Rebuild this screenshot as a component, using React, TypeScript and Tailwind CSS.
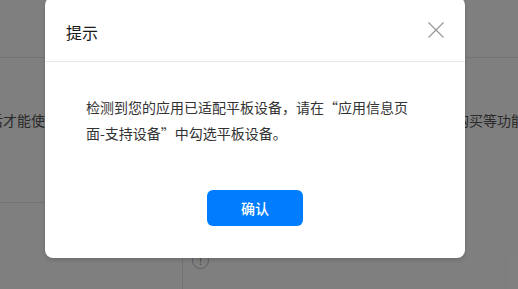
const font = { fontFamily: '"Noto Sans CJK SC", "Noto Sans", sans-serif' };

export default function App() {
  return (
    <div className="relative w-[518px] h-[289px] overflow-hidden bg-white" style={font}>
      {/* page behind the dialog */}
      <div className="flex flex-col h-full">
        <div className="h-[58px] border-b border-[#e6e6e6]" />
        <div className="flex justify-between items-center h-[60px] mt-[32px] text-[14px] text-[#555]">
          <span className="-ml-[11px] whitespace-nowrap">后才能使用</span>
          <span className="-mr-[7px] whitespace-nowrap">购买等功能</span>
        </div>
        <div className="flex flex-1 mt-[52px]">
          <div className="w-[183px] border-t border-r border-[#e6e6e6]" />
          <div className="flex-1 pt-[50px] pl-[9px]">
            <div className="w-[17px] h-[17px] rounded-full border border-[#bbb] flex items-center justify-center text-[11px] text-[#999]">!</div>
          </div>
        </div>
      </div>

      {/* mask */}
      <div className="absolute inset-0 bg-black/50" />

      {/* dialog */}
      <div className="absolute left-[45px] -top-[3px] w-[420px] h-[261px] bg-white rounded-[8px] flex flex-col shadow-[0_2px_4px_rgba(0,0,0,0.15)]">
        <div className="flex items-center justify-between h-[65px] pl-[21px] pr-[21px] border-b border-[#e8e8e8]">
          <span className="text-[16px] text-[#191919] mt-[6px]">提示</span>
          <svg width="16" height="16" viewBox="0 0 16 16" className="mt-[1px]">
            <path d="M0.5 0.5L15.5 15.5M15.5 0.5L0.5 15.5" stroke="#999" strokeWidth="1.3" fill="none" />
          </svg>
        </div>
        <p className="w-[330px] ml-[41px] mt-[32px] text-[14px] leading-[26px] text-[#333]">
          检测到您的应用已适配平板设备，请在“应用信息页面-支持设备”中勾选平板设备。
        </p>
        <div className="flex justify-center mt-[44px]">
          <button className="w-[96px] h-[36px] rounded-[6px] bg-[#007dff] text-white text-[14px] font-medium">
            确认
          </button>
        </div>
      </div>
    </div>
  );
}
